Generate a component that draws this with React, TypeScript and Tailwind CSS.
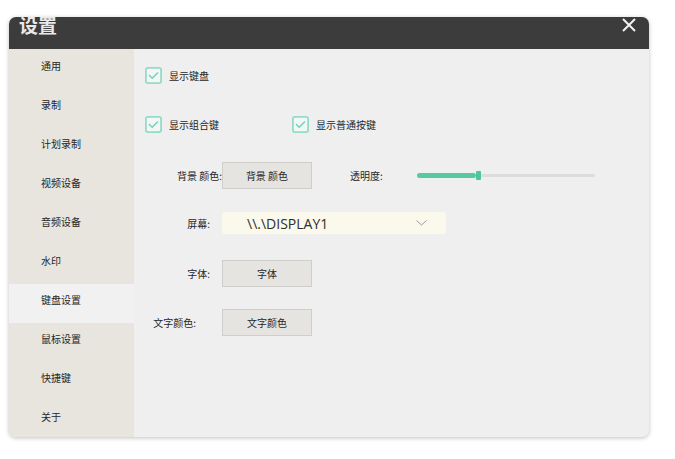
import React from 'react';

const cjk = { fontFamily: '"Noto Sans CJK SC", "Noto Sans", sans-serif' };

const menu = ['通用', '录制', '计划录制', '视频设备', '音频设备', '水印', '键盘设置', '鼠标设置', '快捷键', '关于'];

function Check({ label }: { label: string }) {
  return (
    <div className="flex items-center">
      <svg width="17" height="17" viewBox="0 0 17 17">
        <rect x="0.9" y="0.9" width="15.2" height="15.2" rx="2" fill="#f2f6f4" stroke="#93dcc8" strokeWidth="1.8" />
        <path d="M4 8 L7.2 11.2 L13 5.4" fill="none" stroke="#72d0b7" strokeWidth="1.4" />
      </svg>
      <span className="ml-[7px] text-[10px] text-[#262626]">{label}</span>
    </div>
  );
}

function Btn({ children }: { children: React.ReactNode }) {
  return (
    <div className="w-[90px] h-[27px] flex items-center justify-center bg-[#e6e4e1] border border-[#d0cecb] text-[10px] text-[#262626]">
      {children}
    </div>
  );
}

export default function App() {
  return (
    <div className="w-[675px] h-[459px] bg-white relative" style={cjk}>
      <div className="absolute left-[9px] top-[17px] w-[640px] h-[420px] rounded-[7px] overflow-hidden flex flex-col bg-[#efefef] shadow-[0_1px_4px_rgba(0,0,0,0.25)]">
        {/* title bar */}
        <div className="h-[32px] bg-[#3c3c3c] flex items-start justify-between shrink-0">
          <span className="ml-[10px] -mt-[2px] text-[19px] leading-none font-bold text-[#e9e9e9]">设置</span>
          <svg className="mr-[13px] mt-[1px]" width="14" height="14" viewBox="0 0 14 14">
            <path d="M1 1 L13 13 M13 1 L1 13" stroke="#f2f2f2" strokeWidth="2" />
          </svg>
        </div>
        <div className="flex flex-1 min-h-0">
          {/* sidebar */}
          <div className="w-[125px] bg-[#e7e5de] pt-[1px] shrink-0">
            {menu.map((m) => (
              <div
                key={m}
                className={`h-[39px] pl-[32px] pt-[10px] text-[10px] leading-[12px] text-[#262626] ${m === '键盘设置' ? 'bg-[#f1f1f1]' : ''}`}
              >
                {m}
              </div>
            ))}
          </div>
          {/* content */}
          <div className="flex-1 flex flex-col">
            <div className="mt-[18px] ml-[11px]">
              <Check label="显示键盘" />
            </div>
            <div className="mt-[32px] ml-[11px] flex">
              <div className="w-[147px]">
                <Check label="显示组合键" />
              </div>
              <Check label="显示普通按键" />
            </div>
            <div className="mt-[29px] flex items-center">
              <div className="w-[88px] text-right text-[10px] text-[#262626]">背景 颜色:</div>
              <Btn>背景 颜色</Btn>
              <div className="ml-[38px] w-[67px] text-[10px] text-[#262626]">透明度:</div>
              <div className="w-[178px] flex items-center">
                <div className="w-[59px] h-[5px] rounded-full bg-[#55caa2]" />
                <div className="w-[5px] h-[9px] rounded-[1px] bg-[#4cc69a]" />
                <div className="flex-1 h-[3px] rounded-full bg-[#dcdcdc]" />
              </div>
            </div>
            <div className="mt-[23px] flex items-center">
              <div className="w-[88px] pr-[12px] text-right text-[10px] text-[#262626]">屏幕:</div>
              <div className="w-[224px] h-[22px] rounded-[3px] bg-[#fbf9ec] flex items-center justify-between pl-[25px] pr-[19px]">
                <span className="text-[14px] text-[#2e2e2e]" style={{ fontFamily: '"Open Sans", "Noto Sans", sans-serif' }}>
                  {'\\\\.\\DISPLAY1'}
                </span>
                <svg width="11" height="6" viewBox="0 0 11 6">
                  <path d="M0.5 0.5 L5.5 5 L10.5 0.5" fill="none" stroke="#9a9a9a" strokeWidth="1" />
                </svg>
              </div>
            </div>
            <div className="mt-[26px] flex items-center">
              <div className="w-[88px] pr-[12px] text-right text-[10px] text-[#262626]">字体:</div>
              <Btn>字体</Btn>
            </div>
            <div className="mt-[22px] flex items-center">
              <div className="w-[88px] pr-[26px] text-right text-[10px] text-[#262626]">文字颜色:</div>
              <Btn>文字颜色</Btn>
            </div>
          </div>
        </div>
      </div>
    </div>
  );
}
